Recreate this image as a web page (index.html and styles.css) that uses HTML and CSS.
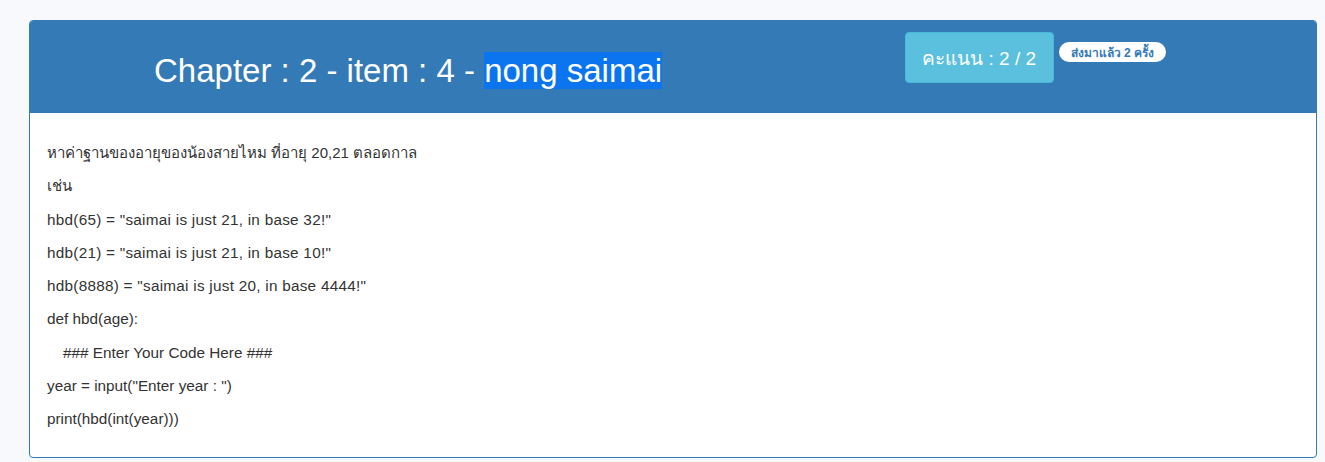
FILE: index.html
```html
<!DOCTYPE html>
<html lang="th">
<head>
<meta charset="utf-8">
<title>Chapter 2 - item 4</title>
<link rel="stylesheet" href="styles.css">
</head>
<body>
<div class="page">
  <div class="card">
    <div class="card-head">
      <h1 class="title">Chapter : 2 - item : 4 - <span class="sel">nong saimai</span></h1>
      <div class="meta">
        <div class="score">คะแนน : 2 / 2</div>
        <span class="pill">ส่งมาแล้ว 2 ครั้ง</span>
      </div>
    </div>
    <div class="card-body">
      <p class="thai">หาค่าฐานของอายุของน้องสายไหม ที่อายุ 20,21 ตลอดกาล</p>
      <p class="thai">เช่น</p>
      <p class="wide">hbd(65) = "saimai is just 21, in base 32!"</p>
      <p class="wide">hdb(21) = "saimai is just 21, in base 10!"</p>
      <p class="wide">hdb(8888) = "saimai is just 20, in base 4444!"</p>
      <p>def hbd(age):</p>
      <p class="indent">### Enter Your Code Here ###</p>
      <p>year = input("Enter year : ")</p>
      <p>print(hbd(int(year)))</p>
    </div>
  </div>
</div>
</body>
</html>
```

FILE: styles.css
```css
* { box-sizing: border-box; }
html, body { margin: 0; padding: 0; }
body {
  background: #f8f9fd;
  font-family: "Liberation Sans", Arial, "Noto Sans", sans-serif;
  color: #333;
}
.page {
  padding: 20px 8px 0 29px;
}
.card {
  border: 1px solid #337ab7;
  border-radius: 4px;
  background: #fff;
  overflow: hidden;
}
.card-head {
  background: #337ab7;
  height: 92px;
  display: flex;
  align-items: flex-start;
}
.title {
  flex: 1;
  margin: 32px 0 0 124px;
  font-weight: normal;
  font-size: 33px;
  line-height: 36px;
  color: #fff;
}
.sel {
  background: #0a75ef;
}
.meta {
  display: flex;
  align-items: flex-start;
  gap: 5px;
  margin: 11px 150px 0 0;
}
.score {
  background: #5bc0de;
  border: 1px solid #46b8da;
  border-radius: 4px;
  color: #fff;
  font-family: "Liberation Sans", "Noto Sans", sans-serif;
  font-size: 19px;
  font-weight: 500;
  width: 149px;
  height: 51px;
  display: flex;
  align-items: center;
  justify-content: center;
}
.pill {
  display: inline-block;
  margin-top: 10px;
  background: #fff;
  color: #337ab7;
  border-radius: 10px;
  font-family: "Liberation Sans", "Noto Sans", sans-serif;
  font-size: 12px;
  font-weight: 700;
  line-height: 18px;
  height: 20px;
  padding: 2px 12px 0;
  white-space: nowrap;
}
.card-body {
  padding: 30px 17px 15px;
}
.card-body p {
  margin: 0 0 13.25px;
  font-size: 15.3px;
  line-height: 20px;
}
.card-body p.thai {
  font-size: 15px;
}
.card-body p.wide {
  letter-spacing: 0.26px;
}
.card-body p.indent {
  padding-left: 16px;
}
```
